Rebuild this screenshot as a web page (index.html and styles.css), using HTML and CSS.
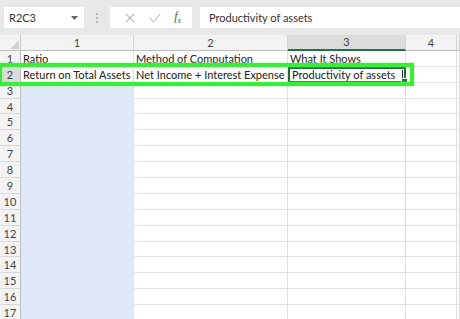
FILE: index.html
```html
<!DOCTYPE html>
<html lang="en">
<head>
  <meta charset="UTF-8">
  <title>Sheet</title>
  <link rel="stylesheet" href="styles.css">
</head>
<body>

<div class="app">
  <div class="toolbar">
    <div class="namebox">
      <span>R2C3</span>
      <svg class="arrow" width="7" height="4" viewBox="0 0 7 4"><path d="M0 0h7L3.5 4z" fill="#666"/></svg>
    </div>
    <div class="grip"></div>
    <div class="fx-buttons">
      <svg width="10" height="10" viewBox="0 0 10 10"><path d="M1 1l8 8M9 1l-8 8" stroke="#bbb" stroke-width="1.1"/></svg>
      <svg width="12" height="10" viewBox="0 0 12 10"><path d="M1 5l3.5 4L11 1" stroke="#bbb" stroke-width="1.1" fill="none"/></svg>
      <span class="fx"><i>f</i><sub>x</sub></span>
    </div>
    <div class="formula">Productivity of assets</div>
  </div>

  <div class="sheet">
    <div class="corner"><svg width="9" height="9" viewBox="0 0 9 9"><path d="M9 0v9H0z" fill="#cfcfcf"/></svg></div>
    <div class="colhead">1</div>
    <div class="colhead">2</div>
    <div class="colhead selected">3</div>
    <div class="colhead">4</div>
    <div class="colhead"></div>

    <div class="rowhead">1</div>
    <div class="cell">Ratio</div>
    <div class="cell">Method of Computation</div>
    <div class="cell">What It Shows</div>
    <div class="cell"></div>
    <div class="cell"></div>

    <div class="rowhead selected">2</div>
    <div class="cell">Return on Total Assets</div>
    <div class="cell">Net Income + Interest Expense</div>
    <div class="cell active">Productivity of assets<span class="caret"></span><span class="handle"></span></div>
    <div class="cell"></div>
    <div class="cell"></div>
  </div>
  <div class="sheet" id="rows"></div>

  <div class="highlight"></div>
</div>

<script>
  const rows = document.getElementById('rows');
  let html = '';
  for (let r = 3; r <= 17; r++) {
    html += '<div class="rowhead">' + r + '</div>';
    html += '<div class="cell blue"></div><div class="cell"></div><div class="cell"></div><div class="cell"></div><div class="cell"></div>';
  }
  rows.innerHTML = html;
</script>

</body>
</html>
```

FILE: styles.css
```css
body {
  margin: 0;
  background: #fff;
  font-family: Lato, "Open Sans", sans-serif;
  font-size: 11px;
  color: #222;
  overflow: hidden;
}
.app {
  position: relative;
  width: 460px;
  height: 319px;
  overflow: hidden;
}
.toolbar {
  height: 35px;
  background: #e8e8e8;
  display: flex;
  align-items: center;
  padding-left: 4px;
  box-sizing: border-box;
}
.namebox {
  width: 80px;
  height: 21px;
  background: #fff;
  display: flex;
  align-items: center;
  justify-content: space-between;
  padding: 0 6px 0 5px;
  box-sizing: border-box;
  color: #333;
}
.grip {
  width: 2px;
  height: 10px;
  margin: 0 10px 0 12px;
  border-left: 2px dotted #b5b5b5;
}
.fx-buttons {
  width: 82px;
  height: 21px;
  background: #fff;
  display: flex;
  align-items: center;
  justify-content: space-around;
  padding: 0 4px 0 8px;
  box-sizing: border-box;
}
.fx {
  font-family: "Liberation Serif", serif;
  font-size: 12px;
  color: #555;
}
.fx sub {
  font-size: 8px;
  font-style: italic;
}
.formula {
  flex: 1;
  height: 21px;
  margin-left: 8px;
  background: #fff;
  display: flex;
  align-items: center;
  padding-left: 9px;
  color: #333;
}
.sheet {
  display: grid;
  grid-template-columns: 21px 113px 154px 118px 51px 1fr;
  grid-auto-rows: 15.9px;
}
.corner, .colhead, .rowhead {
  background: #f3f3f3;
  color: #444;
  display: flex;
  align-items: center;
  justify-content: center;
  box-sizing: border-box;
}
.corner {
  border-right: 1px solid #c8c8c8;
  border-bottom: 1px solid #bdbdbd;
  align-items: flex-end;
  justify-content: flex-end;
  padding: 0 1px 1px 0;
}
.colhead {
  border-right: 1px solid #d4d4d4;
  border-bottom: 1px solid #bdbdbd;
}
.colhead.selected {
  background: #dcdcdc;
  border-bottom: 2px solid #217346;
}
.rowhead {
  border-right: 1px solid #bdbdbd;
  border-bottom: 1px solid #d9d9d9;
}
.rowhead.selected {
  background: #dcdcdc;
}
.cell {
  border-right: 1px solid #e1e1e1;
  border-bottom: 1px solid #e1e1e1;
  padding-left: 2px;
  white-space: nowrap;
  overflow: hidden;
  box-sizing: border-box;
  line-height: 15px;
}
.cell.blue {
  background: #dfe8f6;
  border-bottom-color: #dfe8f6;
}
.cell.active {
  position: relative;
  border: 2px solid #1e6b3a;
  line-height: 12px;
  overflow: visible;
}
.caret {
  position: absolute;
  right: 1px;
  top: 1px;
  width: 1px;
  height: 10px;
  background: #222;
}
.handle {
  position: absolute;
  right: -4px;
  bottom: -4px;
  width: 5px;
  height: 5px;
  background: #1e6b3a;
  border: 1px solid #fff;
}
.highlight {
  position: absolute;
  left: -2px;
  top: 63px;
  width: 416px;
  height: 23px;
  border: 4px solid #3bec3b;
  box-shadow: 0 0 2px #8ff58f, inset 0 0 2px #8ff58f;
  box-sizing: border-box;
}
```
